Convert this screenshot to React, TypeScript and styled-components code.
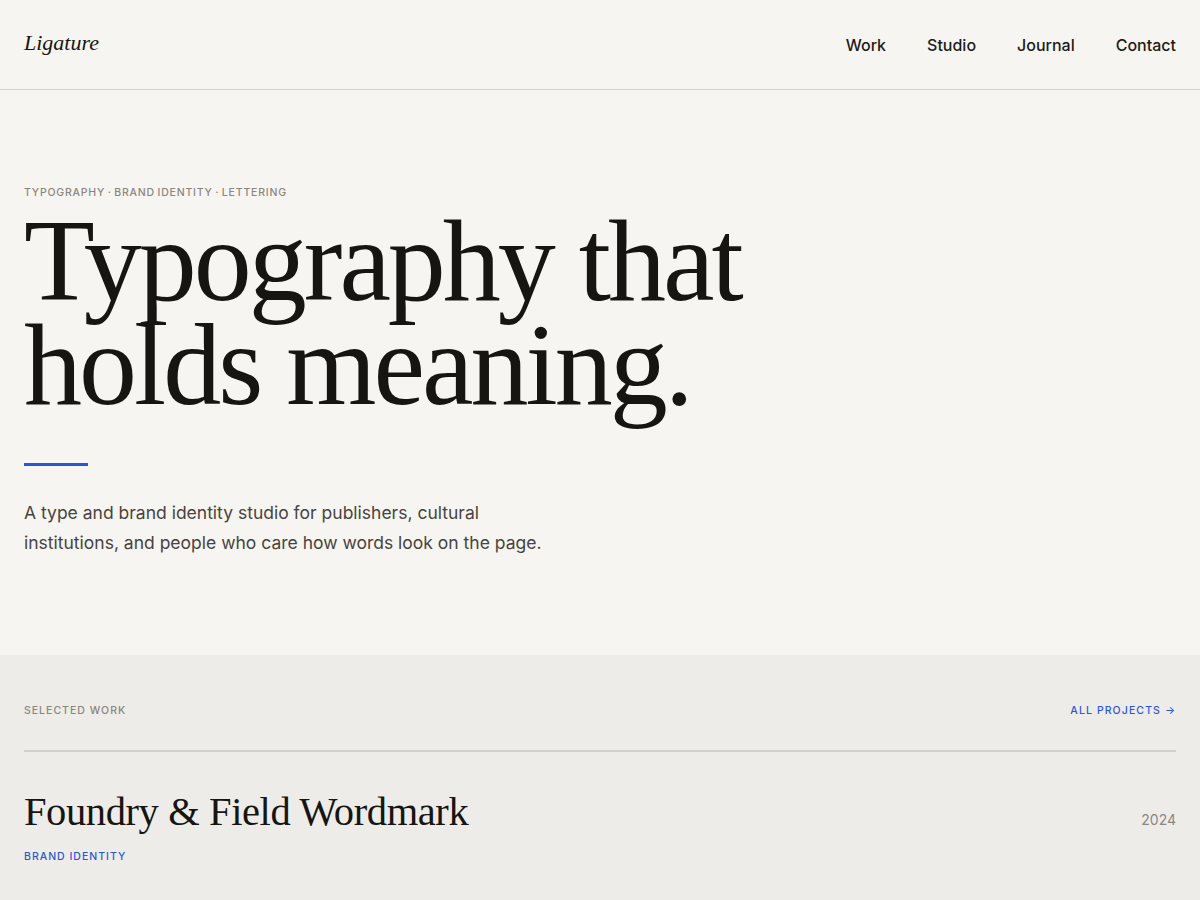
import React from "react";
import styled, { createGlobalStyle } from "styled-components";

const GlobalStyle = createGlobalStyle`
  * { box-sizing: border-box; }
  body {
    margin: 0;
    background: #f7f5f1;
    font-family: "Inter", "Liberation Sans", sans-serif;
    color: #161512;
  }
`;

const App = () => {
  return (
    <>
      <GlobalStyle />
      <Header>
        <Logo>Ligature</Logo>
        <Nav>
          <NavLink>Work</NavLink>
          <NavLink>Studio</NavLink>
          <NavLink>Journal</NavLink>
          <NavLink>Contact</NavLink>
        </Nav>
      </Header>
      <Hero>
        <Eyebrow>Typography · Brand Identity · Lettering</Eyebrow>
        <Headline>
          Typography that
          <br />
          holds meaning.
        </Headline>
        <Rule />
        <Lead>
          A type and brand identity studio for publishers, cultural
          institutions, and people who care how words look on the page.
        </Lead>
      </Hero>
      <Work>
        <WorkHead>
          <Label>Selected Work</Label>
          <AllLink>All Projects →</AllLink>
        </WorkHead>
        <Project>
          <ProjectInfo>
            <ProjectTitle>Foundry &amp; Field Wordmark</ProjectTitle>
            <Tag>Brand Identity</Tag>
          </ProjectInfo>
          <Year>2024</Year>
        </Project>
      </Work>
    </>
  );
};

export default App;

const Header = styled.header`
  height: 90px;
  padding: 0 24px;
  display: flex;
  align-items: center;
  justify-content: space-between;
  border-bottom: 1px solid #d6d3cd;
`;

const Logo = styled.div`
  font-family: "Liberation Serif", serif;
  font-style: italic;
  font-size: 22px;
  color: #161512;
  margin-top: -4px;
`;

const Nav = styled.nav`
  display: flex;
  gap: 41px;
`;

const NavLink = styled.a`
  font-size: 16px;
  font-weight: 500;
  color: #1c1b18;
  cursor: pointer;
`;

const Hero = styled.section`
  padding: 96px 24px 97px;
`;

const Eyebrow = styled.div`
  font-size: 10.5px;
  letter-spacing: 0.8px;
  word-spacing: -1px;
  text-transform: uppercase;
  color: #8a8680;
  font-weight: 500;
`;

const Headline = styled.h1`
  margin: 10px 0 0;
  font-family: "Liberation Serif", serif;
  font-weight: 400;
  font-size: 116px;
  line-height: 104px;
  letter-spacing: -3px;
  color: #161512;
`;

const Rule = styled.div`
  width: 64px;
  height: 3px;
  background: #2a57d6;
  margin-top: 46px;
`;

const Lead = styled.p`
  margin: 32px 0 0;
  max-width: 530px;
  font-size: 17.5px;
  line-height: 30px;
  color: #47443f;
`;

const Work = styled.section`
  background: #eeece8;
  padding: 49px 24px 40px;
  min-height: 245px;
`;

const WorkHead = styled.div`
  display: flex;
  justify-content: space-between;
  align-items: center;
  padding-bottom: 33px;
  border-bottom: 2px solid #d3d0ca;
`;

const Label = styled.div`
  font-size: 10.5px;
  letter-spacing: 1px;
  text-transform: uppercase;
  color: #8a8680;
  font-weight: 500;
`;

const AllLink = styled.a`
  font-size: 10.5px;
  letter-spacing: 1.1px;
  text-transform: uppercase;
  color: #2a57d6;
  font-weight: 500;
  cursor: pointer;
`;

const Project = styled.div`
  display: flex;
  justify-content: space-between;
  align-items: flex-start;
  padding-top: 36px;
`;

const ProjectInfo = styled.div`
  display: flex;
  flex-direction: column;
`;

const ProjectTitle = styled.h2`
  margin: 0;
  font-family: "Liberation Serif", serif;
  font-weight: 400;
  font-size: 40.5px;
  line-height: 48px;
  letter-spacing: -0.4px;
  color: #161512;
`;

const Tag = styled.div`
  margin-top: 14px;
  font-size: 10.5px;
  letter-spacing: 1px;
  text-transform: uppercase;
  color: #2a57d6;
  font-weight: 500;
`;

const Year = styled.div`
  font-size: 14px;
  color: #8a8680;
  margin-top: 23px;
`;
